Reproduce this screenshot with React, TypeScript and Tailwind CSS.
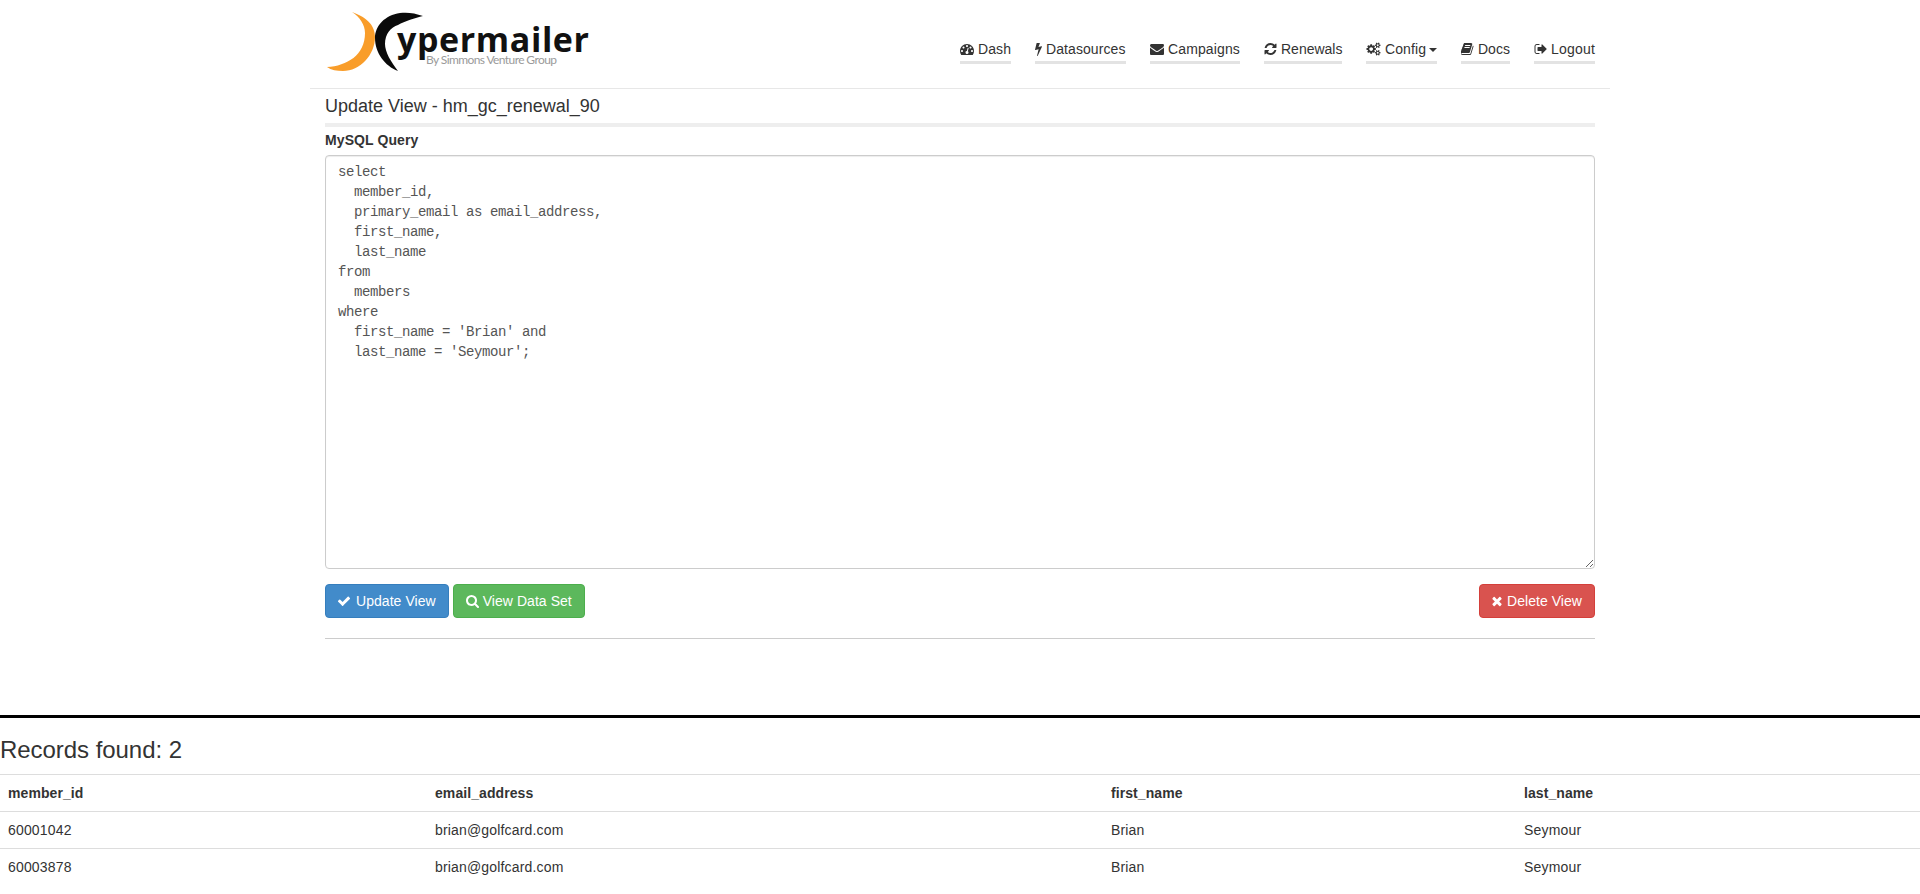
import React from "react";

const query = `select
  member_id,
  primary_email as email_address,
  first_name,
  last_name
from
  members
where
  first_name = 'Brian' and
  last_name = 'Seymour';`;

const records = [
    { id: "60001042", email: "brian@golfcard.com", first: "Brian", last: "Seymour" },
    { id: "60003878", email: "brian@golfcard.com", first: "Brian", last: "Seymour" },
];

// font awesome 4 glyphs, cropped to their ink so widths line up with the nav
const icons = {
    dash: {
        vb: "0 0 1792 1792",
        w: 14,
        d: "M384 1152q0-53-37.500-90.500t-90.500-37.500-90.500 37.500-37.500 90.500 37.500 90.500 90.500 37.500 90.500-37.500 37.500-90.500zm192-448q0-53-37.500-90.500t-90.500-37.500-90.500 37.500-37.500 90.500 37.500 90.500 90.500 37.500 90.500-37.500 37.500-90.500zm428 481l101-382q6-26-7.500-48.500t-38.500-29.500-48 6.500-30 39.500l-101 382q-60 5-107 43.500t-63 98.500q-20 77 20 146t117 89 146-20 89-117q16-60-6-117t-72-91zm660-33q0-53-37.500-90.500t-90.500-37.500-90.500 37.500-37.500 90.500 37.500 90.500 90.500 37.500 90.500-37.500 37.500-90.500zm-640-640q0-53-37.500-90.500t-90.500-37.500-90.500 37.500-37.500 90.500 37.500 90.500 90.500 37.500 90.500-37.500 37.500-90.500zm448 192q0-53-37.500-90.500t-90.500-37.500-90.500 37.500-37.500 90.500 37.500 90.500 90.500 37.500 90.500-37.500 37.500-90.500zm320 448q0 261-141 483-19 29-54 29h-1402q-35 0-54-29-141-221-141-483 0-182 71-348t191-286 286-191 348-71 348 71 286 191 191 286 71 348z",
    },
    bolt: {
        vb: "448 0 896 1792",
        w: 7,
        d: "M1333 566q18 20 7 44l-540 1157q-13 25-42 25-4 0-14-2-17-5-25.500-19t-4.500-30l197-808-406 101q-4 1-12 1-18 0-31-11-18-15-13-39l201-825q4-14 16-23t28-9h328q19 0 32 12.500t13 29.500q0 8-5 18l-171 463 396-98q8-2 12-2 19 0 34 15z",
    },
    envelope: {
        vb: "0 0 1792 1792",
        w: 14,
        d: "M1792 710v794q0 66-47 113t-113 47h-1472q-66 0-113-47t-47-113v-794q44 49 101 87 362 246 497 345 57 42 92.500 65.500t94.500 48 110 24.500h2q51 0 110-24.500t94.500-48 92.500-65.500q170-123 498-345 57-39 100-87zm0-294q0 79-49 151t-122 123q-376 261-468 325-10 7-42.500 30.500t-54 38-52 32.500-57.500 27-50 9h-2q-23 0-50-9t-57.500-27-52-32.500-54-38-42.500-30.500q-91-64-262-182.500t-205-142.500q-62-42-117-115.500t-55-136.500q0-78 41.500-130t118.500-52h1472q65 0 112.500 47t47.500 113z",
    },
    refresh: {
        vb: "64 0 1664 1792",
        w: 13,
        d: "M1639 1056q0 5-1 7-64 268-268 434.500t-478 166.500q-146 0-282.500-55t-243.500-157l-129 129q-19 19-45 19t-45-19-19-45v-448q0-26 19-45t45-19h448q26 0 45 19t19 45-19 45l-137 137q71 66 161 102t187 36q134 0 250-65t186-179q11-17 53-117 8-23 30-23h192q13 0 22.500 9.500t9.500 22.500zm25-800v448q0 26-19 45t-45 19h-448q-26 0-45-19t-19-45 19-45l138-138q-148-137-349-137-134 0-250 65t-186 179q-11 17-53 117-8 23-30 23h-199q-13 0-22.500-9.500t-9.500-22.500v-7q65-268 270-434.500t480-166.500q146 0 284 55.500t245 156.500l130-129q19-19 45-19t45 19 19 45z",
    },
    cogs: {
        vb: "0 0 2048 1792",
        w: 15,
        d: "M960 896q0-106-75-181t-181-75-181 75-75 181 75 181 181 75 181-75 75-181zm768 512q0-52-38-90t-90-38-90 38-38 90q0 53 37.500 90.500t90.500 37.500 90.500-37.500 37.500-90.500zm0-1024q0-52-38-90t-90-38-90 38-38 90q0 53 37.500 90.500t90.500 37.500 90.500-37.500 37.500-90.500zm-384 421v185q0 10-7 19.500t-16 10.500l-155 24q-11 35-32 76 34 48 90 115 7 11 7 20 0 12-7 19-23 30-82.500 89.500t-78.500 59.500q-11 0-21-7l-115-90q-37 19-77 31-11 108-23 155-7 24-30 24h-186q-11 0-20-7.500t-10-17.500l-23-153q-34-10-75-31l-118 89q-7 7-20 7-11 0-21-8-144-133-144-160 0-9 7-19 10-14 41-53t47-61q-23-44-35-82l-152-24q-10-1-17-9.500t-7-19.500v-185q0-10 7-19.500t16-10.500l155-24q11-35 32-76-34-48-90-115-7-11-7-20 0-12 7-20 22-30 82-89t79-59q11 0 21 7l115 90q34-18 77-32 11-108 23-154 7-24 30-24h186q11 0 20 7.500t10 17.500l23 153q34 10 75 31l118-89q8-7 20-7 11 0 21 8 144 133 144 160 0 8-7 19-12 16-42 54t-45 60q23 48 34 82l152 23q10 2 17 10.500t7 19.500zm640 533v140q0 16-149 31-12 27-30 52 51 113 51 138 0 4-4 7-122 71-124 71-8 0-46-47t-52-68q-20 2-30 2t-30-2q-14 21-52 68t-46 47q-2 0-124-71-4-3-4-7 0-25 51-138-18-25-30-52-149-15-149-31v-140q0-16 149-31 13-29 30-52-51-113-51-138 0-4 4-7 4-2 35-20t59-34 30-16q8 0 46 46.500t52 67.500q20-2 30-2t30 2q51-71 92-112l6-2q4 0 124 70 4 3 4 7 0 25-51 138 17 23 30 52 149 15 149 31zm0-1024v140q0 16-149 31-12 27-30 52 51 113 51 138 0 4-4 7-122 71-124 71-8 0-46-47t-52-68q-20 2-30 2t-30-2q-14 21-52 68t-46 47q-2 0-124-71-4-3-4-7 0-25 51-138-18-25-30-52-149-15-149-31v-140q0-16 149-31 13-29 30-52-51-113-51-138 0-4 4-7 4-2 35-20t59-34 30-16q8 0 46 46.500t52 67.500q20-2 30-2t30 2q51-71 92-112l6-2q4 0 124 70 4 3 4 7 0 25-51 138 17 23 30 52 149 15 149 31z",
    },
    book: {
        vb: "64 0 1664 1792",
        w: 13,
        d: "M1639 478q40 57 18 129l-275 906q-19 64-76.500 107.500t-122.500 43.500h-923q-77 0-148.500-53.500t-99.500-131.500q-24-67-2-127 0-4 3-27t4-37q1-8-3-21.500t-3-19.500q2-11 8-21t16.500-23.500 16.500-23.500q23-38 45-91.500t30-91.500q3-10 .5-30t-.5-28q3-11 17-28t17-23q21-36 42-92t25-90q1-9-2.500-32t.5-28q4-13 22-30.500t22-22.500q19-26 42.500-84.500t27.500-96.500q1-8-3-25.500t-2-26.500q2-8 9-18t18-23 17-21q8-12 16.500-30.500t15-35 16-36 19.500-32 26.500-23.500 36-11.500 47.500 5.500l-1 3q38-9 51-9h761q74 0 114 56t18 130l-274 906q-36 119-71.500 153.500t-128.500 34.500h-869q-27 0-38 15-11 16-1 43 24 70 144 70h923q29 0 56-15.500t35-41.500l300-987q7-22 5-57 38 15 59 43zm-1064 2q-4 13 2 22.500t20 9.500h608q13 0 25.500-9.500t16.500-22.500l21-64q4-13-2-22.500t-20-9.500h-608q-13 0-25.500 9.500t-16.500 22.500zm-83 256q-4 13 2 22.500t20 9.500h608q13 0 25.500-9.500t16.500-22.500l21-64q4-13-2-22.500t-20-9.500h-608q-13 0-25.500 9.500t-16.500 22.500z",
    },
    logout: {
        vb: "0 0 1664 1792",
        w: 13,
        d: "M704 1440q0 4 1 20t.5 26.500-3 23.500-10 19.500-20.500 6.500h-320q-119 0-203.500-84.500t-84.500-203.500v-704q0-119 84.500-203.500t203.500-84.500h320q13 0 22.500 9.500t9.500 22.500q0 4 1 20t.5 26.500-3 23.500-10 19.500-20.500 6.500h-320q-66 0-113 47t-47 113v704q0 66 47 113t113 47h312l11.500 1 11.500 3 8 5.500 7 9 2 13.500zm928-544q0 26-19 45l-544 544q-19 19-45 19t-45-19-19-45v-288h-448q-26 0-45-19t-19-45v-384q0-26 19-45t45-19h448v-288q0-26 19-45t45-19 45 19l544 544q19 19 19 45z",
    },
    check: {
        vb: "128 0 1536 1792",
        w: 12,
        d: "M1671 566q0 40-28 68l-724 724-136 136q-28 28-68 28t-68-28l-136-136-362-362q-28-28-28-68t28-68l136-136q28-28 68-28t68 28l294 295 656-657q28-28 68-28t68 28l136 136q28 28 28 68z",
    },
    search: {
        vb: "64 0 1664 1792",
        w: 13,
        d: "M1216 832q0-185-131.500-316.500t-316.500-131.500-316.500 131.500-131.500 316.500 131.500 316.500 316.500 131.500 316.500-131.500 131.500-316.500zm512 832q0 52-38 90t-90 38q-54 0-90-38l-343-342q-179 124-399 124-143 0-273.500-55.500t-225-150-150-225-55.500-273.500 55.500-273.500 150-225 225-150 273.500-55.500 273.500 55.500 225 150 150 225 55.500 273.500q0 220-124 399l343 343q37 37 37 90z",
    },
    times: {
        vb: "256 0 1280 1792",
        w: 10,
        d: "M1490 1322q0 40-28 68l-136 136q-28 28-68 28t-68-28l-294-294-294 294q-28 28-68 28t-68-28l-136-136q-28-28-28-68t28-68l294-294-294-294q-28-28-28-68t28-68l136-136q28-28 68-28t68 28l294 294 294-294q28-28 68-28t68 28l136 136q28 28 28 68t-28 68l-294 294 294 294q28 28 28 68z",
    },
};

function Icon({ name }: { name: keyof typeof icons }) {
    const icon = icons[name];
    return (
        <svg viewBox={icon.vb} width={icon.w} height={14} fill="currentColor" className="shrink-0">
            <path d={icon.d} />
        </svg>
    );
}

function NavItem({
    icon,
    label,
    labelClass,
    caret,
}: {
    icon: keyof typeof icons;
    label: string;
    labelClass: string;
    caret?: boolean;
}) {
    return (
        <a className="flex h-[25px] items-start gap-[4px] border-b-[3px] border-[#e3e3e3] pb-[2px] text-[14px] text-[#333]">
            <span className="flex h-[20px] items-center">
                <Icon name={icon} />
            </span>
            <span className={labelClass}>{label}</span>
            {caret && (
                <span className="ml-[-1px] mt-[9px] h-0 w-0 border-x-[4px] border-t-[4px] border-x-transparent border-t-[#333]" />
            )}
        </a>
    );
}

function Logo() {
    return (
        <svg width="270" height="88" viewBox="0 0 270 88">
            <path d="M27 12 C44 18 50 27 50 37 C50 55 35 71 18 71 C12 71 6 70 2 67 C22 66 40 55 40 33 C40 25 35 17 27 12 Z" fill="#f99d2a" />
            <path d="M98 16 C90 13 82 12 75 13 C60 15 50 26 50 38 C50 53 60 66 73 71 C66 62 60 52 60 44 C60 34 66 27 73 25 C80 21 90 18 98 16 Z" fill="#0a0a0a" />
            <text x="72" y="52" fontFamily="'Open Sans', sans-serif" fontWeight="700" fontSize="34" fill="#111" textLength="192">
                ypermailer
            </text>
            <text x="101" y="64" fontFamily="'Lato', sans-serif" fontSize="12" fill="#9a9a9a" textLength="131">
                By Simmons Venture Group
            </text>
        </svg>
    );
}

export default function App() {
    return (
        <div className="min-h-[894px] bg-white font-['Liberation_Sans',Arial,sans-serif] text-[14px] leading-[20px] text-[#333] antialiased">
            <div className="mx-auto w-[1300px]">
                <header className="flex h-[89px] items-start justify-between border-b border-[#e7e7e7] px-[15px]">
                    <Logo />
                    <nav className="mt-[39px] flex gap-[24px]">
                        <NavItem icon="dash" label="Dash" labelClass="w-[33px] tracking-[0.1px]" />
                        <NavItem icon="bolt" label="Datasources" labelClass="w-[80px] tracking-[0.08px]" />
                        <NavItem icon="envelope" label="Campaigns" labelClass="w-[72px] tracking-[0.13px]" />
                        <NavItem icon="refresh" label="Renewals" labelClass="w-[61px]" />
                        <NavItem icon="cogs" label="Config" labelClass="w-[41px] tracking-[0.1px]" caret />
                        <NavItem icon="book" label="Docs" labelClass="w-[32px]" />
                        <NavItem icon="logout" label="Logout" labelClass="w-[44px] tracking-[0.2px]" />
                    </nav>
                </header>
                <main className="px-[15px]">
                    <h4 className="mt-[7px] border-b-[4px] border-[#eee] pb-[7px] text-[18px] leading-[20px]">
                        Update View - hm_gc_renewal_90
                    </h4>
                    <label className="mt-[3px] block text-[14px] font-bold leading-[20px] tracking-[0.1px]">MySQL Query</label>
                    <textarea
                        readOnly
                        defaultValue={query}
                        className="mt-[5px] block h-[414px] w-full rounded-[4px] border border-[#ccc] px-[12px] py-[6px] font-['Liberation_Mono',monospace] text-[14px] leading-[20px] tracking-[-0.4px] text-[#555] shadow-[inset_0_1px_1px_rgba(0,0,0,0.075)]"
                    />
                    <div className="mt-[15px] flex items-center gap-[4px]">
                        <button className="flex h-[34px] items-center gap-[6px] rounded-[4px] border border-[#357ebd] bg-[#428bca] px-[12px] tracking-[0.05px] text-white">
                            <Icon name="check" /> Update View
                        </button>
                        <button className="flex h-[34px] items-center gap-[4px] rounded-[4px] border border-[#4cae4c] bg-[#5cb85c] px-[12px] tracking-[0.05px] text-white">
                            <Icon name="search" /> View Data Set
                        </button>
                        <button className="ml-auto flex h-[34px] items-center gap-[5px] rounded-[4px] border border-[#d43f3a] bg-[#d9534f] px-[12px] tracking-[0.05px] text-white">
                            <Icon name="times" /> Delete View
                        </button>
                    </div>
                    <hr className="mt-[20px] border-t border-[#ccc]" />
                </main>
            </div>
            <section className="mt-[76px] border-t-[3px] border-black">
                <h3 className="mt-[19px] text-[24px] leading-[26px] tracking-[-0.05px]">Records found: 2</h3>
                <table className="mt-[11px] w-full table-fixed border-collapse text-[14px]">
                    <colgroup>
                        <col className="w-[427px]" />
                        <col className="w-[676px]" />
                        <col className="w-[413px]" />
                        <col />
                    </colgroup>
                    <thead>
                        <tr className="border-t border-[#ddd] tracking-[0.08px]">
                            <th className="h-[37px] px-[8px] text-left font-bold">member_id</th>
                            <th className="h-[37px] px-[8px] text-left font-bold">email_address</th>
                            <th className="h-[37px] px-[8px] text-left font-bold">first_name</th>
                            <th className="h-[37px] px-[8px] text-left font-bold">last_name</th>
                        </tr>
                    </thead>
                    <tbody>
                        {records.map((record) => (
                            <tr key={record.id} className="border-t border-[#ddd] tracking-[0.17px]">
                                <td className="h-[37px] px-[8px]">{record.id}</td>
                                <td className="h-[37px] px-[8px]">{record.email}</td>
                                <td className="h-[37px] px-[8px]">{record.first}</td>
                                <td className="h-[37px] px-[8px]">{record.last}</td>
                            </tr>
                        ))}
                    </tbody>
                </table>
            </section>
        </div>
    );
}
